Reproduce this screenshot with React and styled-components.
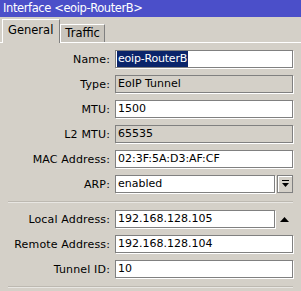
import React from "react";
import styled, { createGlobalStyle } from "styled-components";

const Global = createGlobalStyle`
  html, body {
    margin: 0;
    padding: 0;
    background: #d4d0c8;
  }
  body {
    font-family: "DejaVu Sans", Verdana, sans-serif;
    font-size: 11px;
    color: #000;
  }
`;

const Window = styled.div`
  width: 301px;
  height: 291px;
  background: #d4d0c8;
  overflow: hidden;
`;

const TitleBar = styled.div`
  height: 17px;
  background: #4b4fc9;
  color: #fff;
  font-size: 11.5px;
  letter-spacing: -0.4px;
  line-height: 17px;
  padding-left: 3px;
  white-space: nowrap;
`;

const TabBar = styled.div`
  display: flex;
  align-items: flex-end;
  height: 25px;
  padding-left: 2px;
  border-bottom: 1px solid #fff;
`;

const Tab = styled.div`
  box-sizing: border-box;
  height: ${(p) => (p.active ? "24px" : "18px")};
  margin-bottom: ${(p) => (p.active ? "-1px" : "0")};
  padding: ${(p) => (p.active ? "3px 6px 0 5px" : "1px 4px 0 4px")};
  font-size: 11.5px;
  background: ${(p) => (p.active ? "#d4d0c8" : "#c9c5bd")};
  border-top: 1px solid #fff;
  border-left: 1px solid #fff;
  border-right: 1px solid #808080;
  white-space: nowrap;
`;

const Panel = styled.div`
  padding: 7px 8px 0 8px;
  display: flex;
  flex-direction: column;
`;

const Group = styled.div`
  display: flex;
  flex-direction: column;
  gap: 7px;
`;

const Row = styled.div`
  display: flex;
  align-items: center;
  height: 18px;
`;

const Label = styled.div`
  width: 102px;
  padding-right: 5px;
  font-size: 11px;
  letter-spacing: 0.15px;
  text-align: right;
  white-space: nowrap;
`;

const Field = styled.div`
  box-sizing: border-box;
  width: ${(p) => (p.short ? "160px" : "178px")};
  height: 18px;
  line-height: 16px;
  padding-left: 2px;
  background: ${(p) => (p.readOnly ? "#d4d0c8" : "#fff")};
  border: 1px solid #808080;
  box-shadow: 1px 1px 0 #fff;
  white-space: nowrap;
  overflow: hidden;
`;

const Selected = styled.span`
  display: inline-block;
  background: #0a246a;
  color: #fff;
  padding: 0 1px;
  margin-left: -1px;
  letter-spacing: -0.2px;
`;

const DropButton = styled.div`
  box-sizing: border-box;
  width: 16px;
  height: 18px;
  margin-left: 2px;
  border: 1px solid #808080;
  box-shadow: inset 1px 1px 0 #fff;
  display: flex;
  align-items: center;
  justify-content: center;
`;

const ArrowSlot = styled.div`
  width: 18px;
  display: flex;
  justify-content: center;
`;

const Separator = styled.div`
  height: 1px;
  background: #bdb9b1;
  border-bottom: 1px solid #e8e6e2;
  margin: ${(p) => p.margin};
`;

const DownIcon = () => (
  <svg width="8" height="8" viewBox="0 0 8 8">
    <rect x="1" y="0" width="7" height="1" fill="#000" />
    <path d="M1 3H8L4.5 7Z" fill="#000" />
  </svg>
);

const UpIcon = () => (
  <svg width="9" height="6" viewBox="0 0 9 6">
    <path d="M0 6H9L4.5 1Z" fill="#000" />
  </svg>
);

const App = () => {
  return (
    <Window>
      <Global />
      <TitleBar>Interface &lt;eoip-RouterB&gt;</TitleBar>
      <TabBar>
        <Tab active>General</Tab>
        <Tab>Traffic</Tab>
      </TabBar>
      <Panel>
        <Group>
          <Row>
            <Label>Name:</Label>
            <Field>
              <Selected>eoip-RouterB</Selected>
            </Field>
          </Row>
          <Row>
            <Label>Type:</Label>
            <Field readOnly>EoIP Tunnel</Field>
          </Row>
          <Row>
            <Label>MTU:</Label>
            <Field>1500</Field>
          </Row>
          <Row>
            <Label>L2 MTU:</Label>
            <Field readOnly>65535</Field>
          </Row>
          <Row>
            <Label>MAC Address:</Label>
            <Field>02:3F:5A:D3:AF:CF</Field>
          </Row>
          <Row>
            <Label>ARP:</Label>
            <Field short>enabled</Field>
            <DropButton>
              <DownIcon />
            </DropButton>
          </Row>
        </Group>
        <Separator margin="8px 0 7px 0" />
        <Group>
          <Row>
            <Label>Local Address:</Label>
            <Field short>192.168.128.105</Field>
            <ArrowSlot>
              <UpIcon />
            </ArrowSlot>
          </Row>
          <Row>
            <Label>Remote Address:</Label>
            <Field>192.168.128.104</Field>
          </Row>
          <Row>
            <Label>Tunnel ID:</Label>
            <Field>10</Field>
          </Row>
        </Group>
        <Separator margin="8px 0 0 0" />
      </Panel>
    </Window>
  );
};

export default App;
